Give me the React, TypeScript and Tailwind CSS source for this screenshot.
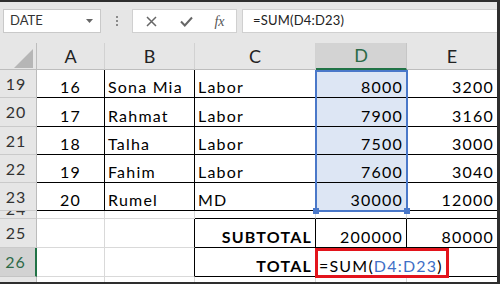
import type { ReactNode } from "react";

const font = { fontFamily: "Lato, 'Open Sans', sans-serif" };

function Cell({ children, className = "" }: { children?: ReactNode; className?: string }) {
  return (
    <div className={`flex items-end overflow-visible whitespace-nowrap pb-[2px] text-[16px] leading-none tracking-[1.2px] text-black ${className}`}>
      {children}
    </div>
  );
}

function RowHead({ n, active = false }: { n: string; active?: boolean }) {
  return (
    <div
      className={
        active
          ? "flex items-center justify-center pr-[4px] text-[16px] leading-none tracking-[1px] bg-[#d2d2d2] text-[#2c6a48] border-b border-[#c4c4c4] border-r-2 border-r-[#217346]"
          : "flex items-center justify-center pr-[4px] text-[16px] leading-none tracking-[1px] bg-[#e6e6e6] text-[#333] border-b border-[#cacaca] border-r border-r-[#bcbcbc]"
      }
    >
      {n}
    </div>
  );
}

const rows = [
  ["19", "16", "Sona Mia", "Labor", "8000", "3200"],
  ["20", "17", "Rahmat", "Labor", "7900", "3160"],
  ["21", "18", "Talha", "Labor", "7500", "3000"],
  ["22", "19", "Fahim", "Labor", "7600", "3040"],
  ["23", "20", "Rumel", "MD", "30000", "12000"],
];

export default function App() {
  return (
    <div
      style={font}
      className="w-[500px] h-[284px] overflow-hidden bg-[#e6e6e6] border-t-2 border-r-[3px] border-b-2 border-[#2e2e2e]"
    >
      {/* formula bar */}
      <div className="flex h-[41px] items-start pl-[3px] pt-[7px]">
        <div className="flex h-[24px] w-[98px] items-center justify-between border border-[#c9c9c9] bg-white pl-[6px] pr-[7px]">
          <span className="text-[13px] text-[#333]">DATE</span>
          <svg width="7" height="4" viewBox="0 0 7 4">
            <path d="M0 0h7L3.5 4z" fill="#666" />
          </svg>
        </div>
        <div className="flex h-[24px] w-[31px] flex-col items-center justify-center gap-[2px]">
          <span className="h-[2px] w-[2px] bg-[#8a8a8a]" />
          <span className="h-[2px] w-[2px] bg-[#8a8a8a]" />
          <span className="h-[2px] w-[2px] bg-[#8a8a8a]" />
        </div>
        <div className="flex h-[24px] w-[105px] items-center border border-[#d0d0d0] bg-white">
          <div className="flex w-[36px] justify-center">
            <svg width="11" height="11" viewBox="0 0 11 11">
              <path d="M1 1l9 9M10 1l-9 9" stroke="#666" strokeWidth="1.5" />
            </svg>
          </div>
          <div className="flex w-[34px] justify-center">
            <svg width="13" height="11" viewBox="0 0 13 11">
              <path d="M1 5.5l3.8 4L12 1.5" stroke="#666" strokeWidth="2" fill="none" />
            </svg>
          </div>
          <div className="flex w-[33px] justify-center">
            <span className="text-[14px] italic text-[#555]" style={{ fontFamily: "'Liberation Serif', serif" }}>
              fx
            </span>
          </div>
        </div>
        <div className="ml-[5px] flex h-[24px] flex-1 items-center border border-r-0 border-[#d0d0d0] bg-white pl-[10px]">
          <span className="text-[13px] tracking-[0.2px] text-[#222]">=SUM(D4:D23)</span>
        </div>
      </div>

      {/* sheet grid */}
      <div className="relative grid grid-cols-[37px_68px_90px_121px_91px_90px] grid-rows-[27px_28px_29px_28px_28px_28px_8px_29px_29px_5px]">
        {/* header row */}
        <div className="relative border-b border-r border-[#bdbdbd] bg-[#e6e6e6]">
          <svg className="absolute left-0 top-0" width="37" height="27" viewBox="0 0 37 27">
            <path d="M33 6v19H14z" fill="#b6b6b6" />
          </svg>
        </div>
        {["A", "B", "C"].map((c) => (
          <div key={c} className="flex items-center justify-center border-b border-r border-b-[#bdbdbd] border-r-[#d2d2d2] bg-[#e6e6e6] text-[18px] text-[#222]">
            {c}
          </div>
        ))}
        <div className="flex items-center justify-center border-r border-r-[#c6c6c6] border-b-2 border-b-[#217346] bg-[#d3d3d3] text-[18px] text-[#2c6a48]">
          D
        </div>
        <div className="flex items-center justify-center border-b border-b-[#bdbdbd] bg-[#e6e6e6] text-[18px] text-[#222]">
          E
        </div>

        {/* data rows */}
        {rows.map((r) => (
          <div key={r[0]} className="contents">
            <RowHead n={r[0]} />
            <Cell className="justify-center border-b border-r border-black bg-white">{r[1]}</Cell>
            <Cell className="pl-[3px] border-b border-r border-black bg-white">{r[2]}</Cell>
            <Cell className="pl-[3px] border-b border-r border-black bg-white">{r[3]}</Cell>
            <Cell className="justify-end pr-[3px] border-b border-r border-black bg-[#dde6f4]">{r[4]}</Cell>
            <Cell className="justify-end pr-[3px] border-b border-black bg-white">{r[5]}</Cell>
          </div>
        ))}

        {/* row 24 (collapsed) */}
        <div className="flex items-start justify-center overflow-hidden pr-[4px] bg-[#e6e6e6] border-b border-[#cacaca] border-r border-r-[#bcbcbc]">
          <span className="-mt-[10px] text-[16px] leading-none tracking-[1px] text-[#333]">24</span>
        </div>
        <div className="border-b border-r border-[#d9d9d9] bg-white" />
        <div className="border-b border-r border-[#d9d9d9] bg-white" />
        <div className="border-b border-r border-b-black border-r-[#d9d9d9] bg-white" />
        <div className="border-b border-r border-b-black border-r-[#d9d9d9] bg-white" />
        <div className="border-b border-b-black bg-white" />

        {/* row 25 */}
        <RowHead n="25" />
        <div className="border-b border-r border-[#d9d9d9] bg-white" />
        <div className="border-b border-r border-b-[#d9d9d9] border-r-black bg-white" />
        <Cell className="justify-end pr-[3px] font-bold border-b border-r border-black bg-white">SUBTOTAL</Cell>
        <Cell className="justify-end pr-[3px] border-b border-r border-black bg-white">200000</Cell>
        <Cell className="justify-end pr-[3px] border-b border-black bg-white">80000</Cell>

        {/* row 26 */}
        <RowHead n="26" active />
        <div className="border-b border-r border-[#d9d9d9] bg-white" />
        <div className="border-b border-r border-b-[#d9d9d9] border-r-black bg-white" />
        <Cell className="justify-end pr-[3px] font-bold border-b border-r border-black bg-white">TOTAL</Cell>
        <div className="relative border-b border-r border-black bg-white">
          <div className="absolute -left-[1px] -top-[0px] -bottom-[2px] z-10 flex w-[134px] items-end border-[3px] border-[#e3141c] bg-white pb-[1px] pl-[1px] text-[16px] leading-none tracking-[1.2px] text-black whitespace-nowrap">
            =SUM(<span className="text-[#3f6fc6]">D4:D23</span>)
          </div>
        </div>
        <div className="border-b border-black bg-white" />

        {/* row 27 (cut off) */}
        <div className="bg-[#e6e6e6] border-r border-[#bcbcbc]" />
        <div className="border-r border-[#d9d9d9] bg-white" />
        <div className="border-r border-[#d9d9d9] bg-white" />
        <div className="border-r border-[#d9d9d9] bg-white" />
        <div className="border-r border-[#d9d9d9] bg-white" />
        <div className="bg-white" />

        {/* referenced range highlight D19:D23 */}
        <div className="pointer-events-none absolute left-[315px] top-[27px] h-[142px] w-[93px] border-2 border-[#4a78c9]">
          <span className="absolute -bottom-[4px] -left-[4px] h-[6px] w-[6px] bg-[#4a78c9]" />
          <span className="absolute -bottom-[4px] -right-[4px] h-[6px] w-[6px] bg-[#4a78c9]" />
        </div>
      </div>
    </div>
  );
}
